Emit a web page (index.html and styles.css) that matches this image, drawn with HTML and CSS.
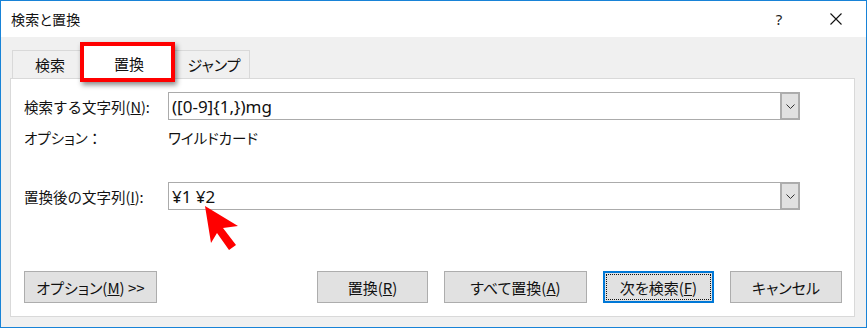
FILE: index.html
```html
<!DOCTYPE html>
<html lang="ja">
<head>
    <meta charset="UTF-8">
    <title>検索と置換</title>
    <link rel="stylesheet" href="styles.css">
</head>
<body>

    <div class="dialog">

        <!-- Title bar -->
        <div class="titlebar">
            <span class="title">検索と置換</span>
            <span class="caption-btn help">?</span>
            <span class="caption-btn close">
                <svg width="12" height="12" viewBox="0 0 12 12">
                    <path d="M0.5 0.5 L11.5 11.5 M11.5 0.5 L0.5 11.5" stroke="#111" stroke-width="1.1" fill="none"/>
                </svg>
            </span>
        </div>

        <div class="client">
            <!-- Tabs -->
            <div class="tabs">
                <div class="tab">検索</div>
                <div class="tab active">置換</div>
                <div class="tab">ジャンプ</div>
            </div>

            <div class="panel">
                <div class="row">
                    <span class="label">検索する文字列(<u>N</u>):</span>
                    <div class="combo">
                        <span class="combo-text">([0-9]{1,})mg</span>
                        <span class="combo-btn">
                            <svg width="9" height="5" viewBox="0 0 9 5"><path d="M0.5 0.5 L4.5 4.5 L8.5 0.5" stroke="#333" fill="none"/></svg>
                        </span>
                    </div>
                </div>

                <div class="row option-row">
                    <span class="label">オプション ：</span>
                    <span class="option-value">ワイルドカード</span>
                </div>

                <div class="row replace-row">
                    <span class="label">置換後の文字列(<u>I</u>):</span>
                    <div class="combo">
                        <span class="combo-text">¥1 ¥2</span>
                        <span class="combo-btn">
                            <svg width="9" height="5" viewBox="0 0 9 5"><path d="M0.5 0.5 L4.5 4.5 L8.5 0.5" stroke="#333" fill="none"/></svg>
                        </span>
                    </div>
                </div>

                <div class="buttons">
                    <button class="btn btn-options">オプション(<u>M</u>) &gt;&gt;</button>
                    <div class="btn-group">
                        <button class="btn btn-replace">置換(<u>R</u>)</button>
                        <button class="btn btn-all">すべて置換(<u>A</u>)</button>
                        <button class="btn btn-next default"><span class="focus">次を検索(<u>F</u>)</span></button>
                        <button class="btn btn-cancel">キャンセル</button>
                    </div>
                </div>
            </div>
        </div>

        <!-- annotation overlays -->
        <div class="highlight"></div>
        <svg class="arrow" width="45" height="55" viewBox="0 0 45 55">
            <polygon points="5,6 11,43 17,33 29,50 36,45 23,28 38,26" fill="#ff0000"/>
        </svg>
    </div>

</body>
</html>
```

FILE: styles.css
```css
/* styles.css */

body {
    margin: 0;
    padding: 0;
    font-family: "Noto Sans CJK JP", sans-serif;
    font-feature-settings: "palt";
    color: #111;
}

.dialog {
    position: relative;
    width: 867px;
    height: 328px;
    box-sizing: border-box;
    border: 1px solid #1883d7;
    display: flex;
    flex-direction: column;
    background: #f0f0f0;
}

/* Title bar */
.titlebar {
    height: 36px;
    background: #fff;
    display: flex;
    align-items: center;
    padding-left: 10px;
    font-size: 14px;
}

.title {
    flex: 1;
    letter-spacing: 0.2px;
}

.caption-btn {
    width: 46px;
    height: 36px;
    display: flex;
    align-items: center;
    justify-content: center;
}

.help {
    font-family: "Noto Sans", sans-serif;
    font-size: 15px;
    color: #222;
    margin-right: 11px;
}

.close {
    margin-right: 7px;
}

/* Client area */
.client {
    flex: 1;
    display: flex;
    flex-direction: column;
    padding: 7px 11px 10px 9px;
}

.tabs {
    display: flex;
    height: 35px;
    padding-left: 2px;
    align-items: flex-end;
}

.tab {
    height: 29px;
    box-sizing: border-box;
    border: 1px solid #d9d9d9;
    border-bottom: none;
    background: #f0f0f0;
    font-size: 15px;
    display: flex;
    align-items: center;
    justify-content: center;
    padding-bottom: 1px;
}

.tab:nth-child(1) {
    width: 71px;
    border-right: none;
    padding-left: 4px;
}

.tab:nth-child(3) {
    width: 75px;
    border-left: none;
    padding-left: 4px;
}

.tab.active {
    width: 92px;
    height: 35px;
    background: #fff;
    position: relative;
    z-index: 1;
    padding-top: 4px;
}

.panel {
    flex: 1;
    margin-top: -1px;
    background: #fff;
    border: 1px solid #d9d9d9;
    padding: 13px 12px 13px 13px;
    display: flex;
    flex-direction: column;
}

.row {
    display: flex;
    align-items: center;
    height: 28px;
    font-size: 14.5px;
}

.label {
    width: 144px;
    flex: none;
    font-feature-settings: normal;
}

.option-row {
    height: 20px;
    margin-top: 7px;
}

.option-row .label {
    font-feature-settings: "palt";
}

.replace-row {
    margin-top: 35px;
}

.combo {
    width: 632px;
    height: 28px;
    box-sizing: border-box;
    border: 1px solid #ababab;
    display: flex;
    align-items: center;
}

.combo-text {
    flex: 1;
    padding-left: 3px;
    font-family: "Noto Sans", "Noto Sans CJK JP", sans-serif;
    font-size: 17px;
}

.combo-btn {
    width: 19px;
    height: 26px;
    box-sizing: border-box;
    border: 1px solid #adadad;
    border-left-width: 2px;
    background: #e1e1e1;
    display: flex;
    align-items: center;
    justify-content: center;
}

/* Buttons */
.buttons {
    margin-top: auto;
    display: flex;
    justify-content: space-between;
}

.btn-group {
    display: flex;
    gap: 16px;
}

.btn {
    height: 32px;
    box-sizing: border-box;
    border: 1px solid #adadad;
    background: #e1e1e1;
    font-family: "Noto Sans CJK JP", sans-serif;
    font-feature-settings: "palt";
    font-size: 15px;
    color: #111;
    padding: 0;
    display: flex;
    align-items: center;
    justify-content: center;
}

.btn-options { width: 133px; }
.btn-replace { width: 111px; }
.btn-all { width: 143px; }
.btn-next { width: 111px; }
.btn-cancel { width: 112px; }

.btn.default {
    border: 2px solid #0078d7;
    padding: 1px;
}

.focus {
    flex: 1;
    align-self: stretch;
    display: flex;
    align-items: center;
    justify-content: center;
    border: 1px dotted #111;
}

/* Annotation */
.highlight {
    position: absolute;
    left: 79px;
    top: 41px;
    width: 95px;
    height: 40px;
    box-sizing: border-box;
    border: 4px solid #ff0000;
    box-shadow: 2px 3px 5px rgba(0, 0, 0, 0.45);
    z-index: 2;
}

.arrow {
    position: absolute;
    left: 199px;
    top: 199px;
    z-index: 2;
}
```
